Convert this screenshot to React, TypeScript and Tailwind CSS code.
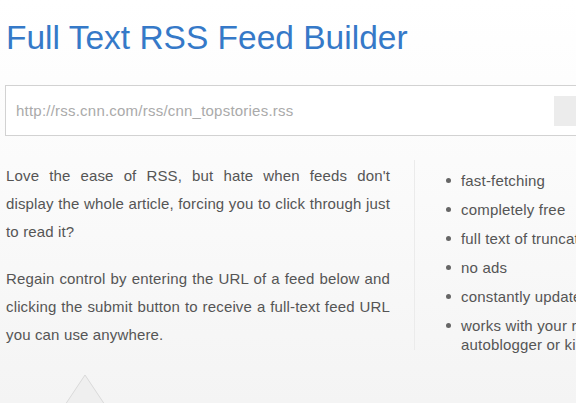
const features = [
  "fast-fetching",
  "completely free",
  "full text of truncated feeds",
  "no ads",
  "constantly updated",
  "works with your reader, autoblogger or kindle",
];

// intro copy, broken the way the column sets it
const intro = [
  [
    "Love the ease of RSS, but hate when feeds don't",
    "display the whole article, forcing you to click through just",
    "to read it?",
  ],
  [
    "Regain control by entering the URL of a feed below and",
    "clicking the submit button to receive a full-text feed URL",
    "you can use anywhere.",
  ],
];

export default function App() {
  return (
    <div className="h-[403px] w-[576px] overflow-hidden bg-gradient-to-b from-white via-[#fafafa] to-[#f4f4f4] font-['Liberation_Sans',Arial,sans-serif]">
      <div className="w-[900px] pl-[5px]">
        <h1 className="pt-[21px] pl-[1px] text-[33.5px] leading-[34px] font-normal text-[#3579c8]">
          Full Text RSS Feed Builder
        </h1>

        <form className="mt-[30px] flex h-[51px] w-[860px] items-center border border-[#d2d2d2] bg-white pl-[10px] pr-[10px]">
          <input
            type="text"
            placeholder="http://rss.cnn.com/rss/cnn_topstories.rss"
            className="h-full flex-1 bg-transparent text-[15px] tracking-[0.22px] text-[#555] outline-none placeholder:text-[#aaa]"
          />
          <button
            type="submit"
            className="h-[30px] w-[300px] bg-[#ececec] text-[15px] text-[#555]"
          >
            Create Feed
          </button>
        </form>

        <div className="mt-[26px] flex">
          <div className="w-[385px] pl-[1px] text-[15px] leading-[28px] tracking-[0.15px] text-[#555]">
            {intro.map((lines, i) => (
              <p key={i} className={i === 0 ? "mb-[19px]" : ""}>
                {lines.map((line, j) => (
                  <span
                    key={j}
                    className={
                      j < lines.length - 1
                        ? "block whitespace-nowrap text-justify [text-align-last:justify]"
                        : "block whitespace-nowrap"
                    }
                  >
                    {line}
                  </span>
                ))}
              </p>
            ))}
          </div>

          <div className="ml-[24px] mt-[-2px] h-[190px] w-px bg-[#ebebeb]" />

          <ul className="ml-[31px] w-[250px] pt-[9px] text-[15px] leading-[19px] tracking-[0.18px] text-[#555]">
            {features.map((f) => (
              <li key={f} className="mb-[10px] flex">
                <span className="mr-[10px] mt-[7px] h-[5px] w-[5px] shrink-0 rounded-full bg-[#666]" />
                <span>{f}</span>
              </li>
            ))}
          </ul>
        </div>

        <svg
          width="44"
          height="34"
          viewBox="0 0 44 34"
          className="ml-[58px] mt-[10px] block"
        >
          <polygon
            points="22,1 0,34 44,34"
            fill="#efefef"
            stroke="#d9d9d9"
            strokeWidth="1"
          />
        </svg>
      </div>
    </div>
  );
}
